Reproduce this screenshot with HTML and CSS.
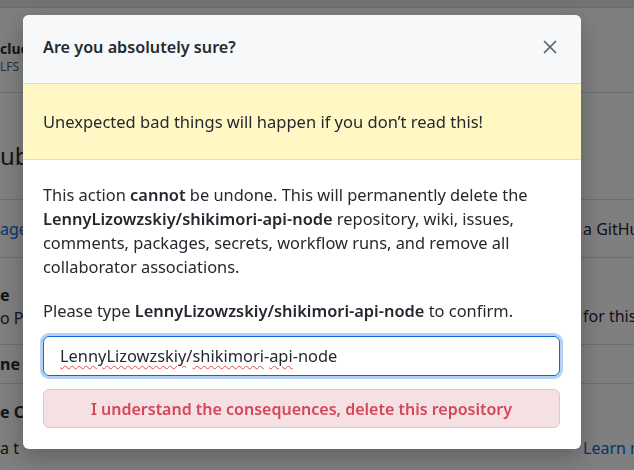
FILE: index.html
```html
<!DOCTYPE html>
<html lang="en">
<head>
  <meta charset="UTF-8">
  <title>Delete repository</title>
  <link rel="stylesheet" href="styles.css">
</head>
<body>
  <div class="page">
    <div class="topbar"></div>

    <div class="row row-lfs">
      <div class="left">
        <strong>cluc</strong>
        <span class="muted">LFS</span>
      </div>
    </div>

    <h2 class="section-title">ub</h2>

    <div class="row row-pages">
      <a class="left link">age</a>
      <span class="right">a GitHub repository.</span>
    </div>

    <div class="row row-theme">
      <div class="left">
        <strong>e</strong>
        <span>o P</span>
      </div>
      <span class="right bottom">for this repository</span>
    </div>

    <div class="row row-name">
      <strong class="left">ne</strong>
    </div>

    <div class="row row-chooser">
      <div class="left">
        <strong>e C</strong>
        <span>a t</span>
      </div>
      <a class="right link bottom">Learn more</a>
    </div>

    <div class="ghost-btn"></div>
  </div>

  <div class="overlay">
    <div class="dialog">
      <div class="dialog-header">
        <h3>Are you absolutely sure?</h3>
        <button class="close" aria-label="Close">
          <svg width="14" height="14" viewBox="0 0 14 14">
            <path d="M1.5 1.5l11 11M12.5 1.5l-11 11" stroke="#57606a" stroke-width="1.7" stroke-linecap="round"/>
          </svg>
        </button>
      </div>

      <div class="flash">Unexpected bad things will happen if you don’t read this!</div>

      <div class="dialog-body">
        <p>This action <b>cannot</b> be undone. This will permanently delete the
          <b>LennyLizowzskiy/shikimori-api-node</b> repository, wiki, issues,
          comments, packages, secrets, workflow runs, and remove all
          collaborator associations.</p>
        <p>Please type <b>LennyLizowzskiy/shikimori-api-node</b> to confirm.</p>

        <div class="field"><span class="typo">LennyLizowzskiy</span>/<span class="typo">shikimori</span>-<span class="typo">api</span>-node</div>

        <button class="btn-danger">I understand the consequences, delete this repository</button>
      </div>
    </div>
  </div>
</body>
</html>
```

FILE: styles.css
```css
body {
  margin: 0;
  font-family: "Noto Sans", "Liberation Sans", sans-serif;
  color: #24292f;
  background: #fff;
  overflow: hidden;
}

.page {
  height: 470px;
  overflow: hidden;
  white-space: nowrap;
}

.topbar {
  height: 7px;
  background: #e4e6e9;
  border-bottom: 1px solid #d0d7de;
}

.row {
  display: flex;
  justify-content: space-between;
  border-bottom: 1px solid #d8dee4;
  font-size: 14px;
}

.row .left {
  display: flex;
  flex-direction: column;
}

.right {
  width: 51px;
  overflow: hidden;
  align-self: center;
}

.right.bottom {
  align-self: flex-end;
}

.muted {
  font-size: 12px;
  color: #57606a;
}

.link {
  color: #0969da;
  text-decoration: none;
}

.row-lfs {
  height: 85px;
  padding-top: 32px;
  box-sizing: border-box;
  line-height: 18px;
}

.section-title {
  margin: 0;
  height: 107px;
  box-sizing: border-box;
  padding-top: 46px;
  font-size: 24px;
  font-weight: 400;
  border-bottom: 1px solid #d8dee4;
}

.row-pages {
  height: 57px;
  align-items: center;
  font-size: 16px;
}

.row-pages .left {
  display: block;
}

.row-theme {
  height: 87px;
  padding-top: 26px;
  padding-bottom: 16px;
  box-sizing: border-box;
  font-size: 16px;
  line-height: 23px;
}

.row-name {
  height: 38px;
  align-items: center;
  font-size: 16px;
}

.row-chooser {
  border-bottom: none;
  padding-top: 10px;
  font-size: 16px;
  line-height: 36px;
}

.ghost-btn {
  margin: 4px 0 0 20px;
  width: 100px;
  height: 30px;
  border: 1px solid #d0d7de;
  border-radius: 6px;
}

.overlay {
  position: fixed;
  inset: 0;
  background: rgba(0, 0, 0, 0.5);
}

.dialog {
  position: absolute;
  left: 23px;
  top: 15px;
  width: 558px;
  background: #fff;
  border-radius: 6px;
  overflow: hidden;
  box-shadow: 0 8px 24px rgba(20, 22, 26, 0.3);
}

.dialog-header {
  display: flex;
  align-items: center;
  justify-content: space-between;
  height: 68px;
  padding: 0 24px 0 20px;
  background: #f6f8fa;
}

.dialog-header h3 {
  margin: 0 0 4px;
  font-size: 16.2px;
  font-weight: 600;
}

.close {
  border: none;
  background: none;
  padding: 0;
  margin-bottom: 4px;
  display: flex;
}

.flash {
  padding: 26px 20px 25px;
  background: #fff8c5;
  border-top: 1px solid #eadfa8;
  border-bottom: 1px solid #eadfa8;
  font-size: 16.5px;
  line-height: 24px;
}

.dialog-body {
  padding: 23px 21px 21px 20px;
  font-size: 16.4px;
  line-height: 24px;
}

.dialog-body p {
  margin: 0 0 20px;
}

.dialog-body p + p {
  margin-bottom: 13px;
}

b {
  font-weight: 600;
}

.field {
  height: 40px;
  box-sizing: border-box;
  padding: 0 16px;
  line-height: 38px;
  border: 1px solid #0969da;
  border-radius: 6px;
  box-shadow: 0 0 0 3px rgba(9, 105, 218, 0.3);
  color: #24292f;
}

.typo {
  text-decoration: underline wavy #e5484d;
  text-decoration-thickness: 1px;
  text-underline-offset: 3px;
}

.btn-danger {
  display: block;
  width: 100%;
  height: 39px;
  margin-top: 13px;
  font-family: inherit;
  font-size: 16px;
  font-weight: 600;
  color: #d4475a;
  background: #f5e1e3;
  border: 1px solid #dcc8ca;
  border-radius: 6px;
}
```
